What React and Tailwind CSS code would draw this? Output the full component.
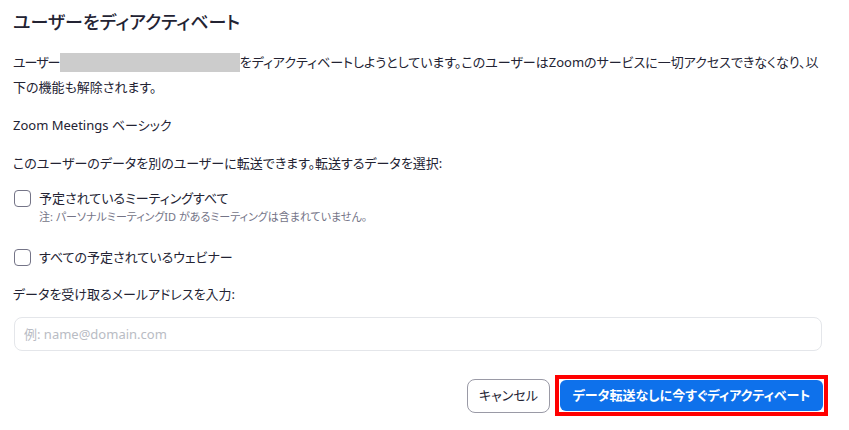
import React from "react";

const font = {
  fontFamily: '"Noto Sans", "Noto Sans CJK JP", sans-serif',
};

function Checkbox() {
  return (
    <span className="inline-block w-[17px] h-[17px] shrink-0 rounded-[4px] border border-[#747487] bg-white" />
  );
}

export default function App() {
  return (
    <div
      className="w-[849px] h-[430px] bg-white text-[#232333] pl-[13px] pr-[21px] pt-[10px] [font-feature-settings:'palt'] overflow-hidden"
      style={font}
    >
      <h1 className="text-[18px] leading-[24px] font-medium text-[#232333]">
        ユーザーをディアクティベート
      </h1>

      <p className="mt-[16px] text-[13px] leading-[25px] whitespace-nowrap">
        <span className="tracking-[-1px]">ユーザー</span>
        <span className="inline-block align-middle w-[180px] h-[19px] bg-[#cccccc] -mt-[2px]" />
        をディアクティベートしようとしています。このユーザーはZoomのサービスに一切アクセスできなくなり、以
        <br />
        下の機能も解除されます。
      </p>

      <p className="mt-[13px] text-[13px] leading-[25px]">Zoom Meetings ベーシック</p>

      <p className="mt-[13px] text-[13px] leading-[25px]">
        このユーザーのデータを別のユーザーに転送できます。転送するデータを選択:
      </p>

      <div className="mt-[11px] flex items-start gap-[8px] pl-[1px]">
        <div className="h-[22px] flex items-center">
          <Checkbox />
        </div>
        <div>
          <div className="text-[13px] leading-[22px]">予定されているミーティングすべて</div>
          <div className="text-[11px] leading-[16px] text-[#747487]">
            注: パーソナルミーティングID があるミーティングは含まれていません。
          </div>
        </div>
      </div>

      <div className="mt-[21px] flex items-center gap-[8px] pl-[1px]">
        <div className="h-[22px] flex items-center">
          <Checkbox />
        </div>
        <div className="text-[13px] leading-[22px]">すべての予定されているウェビナー</div>
      </div>

      <p className="mt-[14px] text-[13px] leading-[25px]">データを受け取るメールアドレスを入力:</p>

      <div className="mt-[10px] pr-[6px] pl-[1px]">
        <input
          type="text"
          placeholder="例: name@domain.com"
          className="w-full h-[34px] rounded-[8px] border border-[#e4e6ea] px-[9px] text-[13px] placeholder:text-[#b9bcc4] outline-none"
          style={font}
        />
      </div>

      <div className="mt-[24px] flex items-center justify-end gap-[5px]">
        <button className="h-[34px] w-[83px] rounded-[8px] border border-[#9a9aa6] bg-white text-[13px] text-[#232333] font-normal">
          キャンセル
        </button>
        <div className="border-[4px] border-[#ff0000] p-[1px]">
          <button className="h-[31px] w-[263px] rounded-[6px] bg-[#0e71eb] text-white text-[13px] font-bold">
            データ転送なしに今すぐディアクティベート
          </button>
        </div>
      </div>
    </div>
  );
}
